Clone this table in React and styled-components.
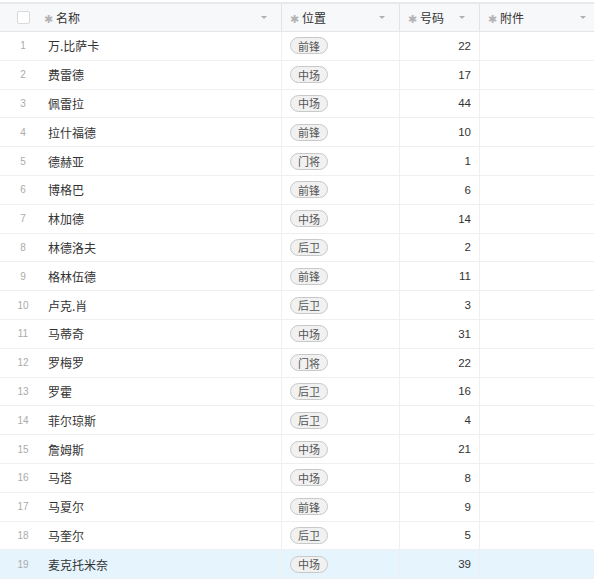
import styled, { createGlobalStyle } from "styled-components";

const players = [
  ["万.比萨卡", "前锋", 22],
  ["费雷德", "中场", 17],
  ["佩雷拉", "中场", 44],
  ["拉什福德", "前锋", 10],
  ["德赫亚", "门将", 1],
  ["博格巴", "前锋", 6],
  ["林加德", "中场", 14],
  ["林德洛夫", "后卫", 2],
  ["格林伍德", "前锋", 11],
  ["卢克.肖", "后卫", 3],
  ["马蒂奇", "中场", 31],
  ["罗梅罗", "门将", 22],
  ["罗霍", "后卫", 16],
  ["菲尔琼斯", "后卫", 4],
  ["詹姆斯", "中场", 21],
  ["马塔", "中场", 8],
  ["马夏尔", "前锋", 9],
  ["马奎尔", "后卫", 5],
  ["麦克托米奈", "中场", 39],
];

const columns = [
  { key: "name", label: "名称" },
  { key: "pos", label: "位置" },
  { key: "num", label: "号码" },
  { key: "file", label: "附件" },
];

export default function App() {
  return (
    <>
      <GlobalStyle />
      <Table>
        <HeaderRow>
          <IndexCell>
            <Checkbox />
          </IndexCell>
          {columns.map((col) => (
            <HeadCell key={col.key} $first={col.key === "name"} $last={col.key === "file"}>
              <HeadLabel>
                <Star>✱</Star>
                {col.label}
              </HeadLabel>
              <Caret />
            </HeadCell>
          ))}
        </HeaderRow>

        {players.map(([name, pos, num], i) => (
          <Row key={name} $active={i === players.length - 1}>
            <IndexCell>
              <IndexNum>{i + 1}</IndexNum>
            </IndexCell>
            <NameCell>{name}</NameCell>
            <Cell>
              <Tag>{pos}</Tag>
            </Cell>
            <NumCell>{num}</NumCell>
            <Cell $last />
          </Row>
        ))}
      </Table>
    </>
  );
}

const GlobalStyle = createGlobalStyle`
  body {
    margin: 0;
    background: #fff;
    font-family: "Noto Sans CJK SC", "Noto Sans", sans-serif;
    color: #333;
  }
`;

const Table = styled.div`
  padding-top: 2px;
  width: 594px;
`;

const gridCols = "40px 242px 118px 80px 1fr";

const HeaderRow = styled.div`
  display: grid;
  grid-template-columns: ${gridCols};
  height: 30px;
  box-sizing: border-box;
  background: #f7f8fa;
  border-top: 2px solid #e9e9e9;
  border-bottom: 1px solid #e6e6e6;
`;

const Row = styled.div`
  display: grid;
  grid-template-columns: ${gridCols};
  height: 28.8px;
  box-sizing: border-box;
  border-bottom: 1px solid #efefef;
  background: ${({ $active }) => ($active ? "#e6f5fd" : "#fff")};
`;

const IndexCell = styled.div`
  display: flex;
  align-items: center;
  justify-content: center;
  padding-left: 6px;
`;

const Checkbox = styled.span`
  width: 11px;
  height: 11px;
  border: 1px solid #d9d9d9;
  border-radius: 2px;
  background: #fff;
`;

const IndexNum = styled.span`
  font-family: "Liberation Sans", sans-serif;
  font-size: 10px;
  color: #ababab;
`;

const HeadCell = styled.div`
  display: flex;
  align-items: center;
  justify-content: space-between;
  padding: 0 ${({ $last }) => ($last ? "8px" : "14px")} 0 ${({ $first }) => ($first ? "4px" : "8px")};
  border-right: ${({ $last }) => ($last ? "none" : "1px solid #e4e4e4")};
`;

const HeadLabel = styled.span`
  display: flex;
  align-items: center;
  gap: 3px;
  font-size: 12px;
  color: #333;
`;

const Star = styled.span`
  font-size: 11px;
  color: #b3b3b3;
`;

const Caret = styled.span`
  width: 0;
  height: 0;
  border-left: 3px solid transparent;
  border-right: 3px solid transparent;
  border-top: 3.5px solid #b0b0b0;
`;

const Cell = styled.div`
  display: flex;
  align-items: center;
  padding: 0 8px;
  border-right: ${({ $last }) => ($last ? "none" : "1px solid #efefef")};
`;

const NameCell = styled(Cell)`
  font-size: 12px;
  color: #333;
`;

const NumCell = styled(Cell)`
  justify-content: flex-end;
  font-family: "Liberation Sans", sans-serif;
  font-size: 11.5px;
  color: #333;
`;

const Tag = styled.span`
  display: inline-flex;
  align-items: center;
  height: 15px;
  padding: 0 7px;
  border: 1px solid #c8c8c8;
  border-radius: 9px;
  background: #f1f1f1;
  font-size: 11px;
  color: #555;
`;
